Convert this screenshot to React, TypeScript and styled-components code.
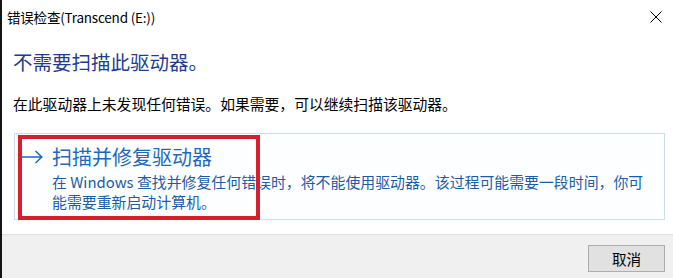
import styled, { createGlobalStyle } from "styled-components";

const GlobalStyle = createGlobalStyle`
  html, body {
    margin: 0;
    padding: 0;
    background: #ffffff;
  }
  body {
    font-family: "Noto Sans CJK SC", "Noto Sans", sans-serif;
  }
`;

const Window = styled.div`
  width: 673px;
  height: 278px;
  box-sizing: border-box;
  border-left: 2px solid #141414;
  background: #ffffff;
  display: flex;
  flex-direction: column;
`;

const TitleBar = styled.div`
  height: 33px;
  display: flex;
  align-items: center;
  justify-content: space-between;
  padding: 0 10px 0 5px;
`;

const Title = styled.span`
  font-size: 13.5px;
  color: #000000;
  letter-spacing: -0.2px;
`;

const CloseButton = styled.button`
  width: 14px;
  height: 14px;
  padding: 0;
  border: none;
  background: transparent;
  display: flex;
  align-items: center;
  justify-content: center;
`;

const Content = styled.div`
  flex: 1;
  padding: 17px 0 0 11px;
`;

const Heading = styled.h1`
  margin: 0;
  font-size: 19.5px;
  line-height: 24px;
  font-weight: 400;
  color: #1d3d8f;
`;

const Message = styled.p`
  margin: 20px 0 0;
  font-size: 14.8px;
  line-height: 20px;
  color: #000000;
`;

const OptionBox = styled.div`
  position: relative;
  margin: 19px 0 0 1px;
  width: 651px;
  height: 87px;
  box-sizing: border-box;
  border: 1px solid #ccdce8;
  background: #fdfeff;
  display: flex;
  align-items: flex-start;
  padding: 10px 8px 0 7px;
`;

const Arrow = styled.svg`
  flex: none;
  width: 21px;
  height: 14px;
  margin: 6px 9px 0 0;
`;

const OptionText = styled.div`
  display: flex;
  flex-direction: column;
`;

const OptionTitle = styled.div`
  font-size: 20px;
  line-height: 26px;
  color: #1f68c0;
`;

const OptionDesc = styled.div`
  margin-top: 2px;
  font-size: 14.9px;
  line-height: 20px;
  color: #1b5ca8;
  white-space: nowrap;
`;

const Highlight = styled.div`
  position: absolute;
  left: 3px;
  top: 1px;
  width: 242px;
  height: 85px;
  box-sizing: border-box;
  border: 4px solid #d4202c;
  pointer-events: none;
`;

const Footer = styled.div`
  height: 44px;
  box-sizing: border-box;
  border-top: 1px solid #dfdfdf;
  background: #f0f0f0;
  display: flex;
  justify-content: flex-end;
  padding: 10px 8px 0 0;
`;

const CancelButton = styled.button`
  width: 77px;
  height: 27px;
  box-sizing: border-box;
  border: 1px solid #adadad;
  background: #e1e1e1;
  font-family: "Noto Sans CJK SC", "Noto Sans", sans-serif;
  font-size: 14.6px;
  color: #000000;
  padding: 0;
`;

export default function App() {
  return (
    <>
      <GlobalStyle />
      <Window>
        <TitleBar>
          <Title>错误检查(Transcend (E:))</Title>
          <CloseButton aria-label="关闭">
            <svg width="12" height="12" viewBox="0 0 12 12">
              <path d="M0.5 0.5 L11.5 11.5 M11.5 0.5 L0.5 11.5" stroke="#000" strokeWidth="1" fill="none" />
            </svg>
          </CloseButton>
        </TitleBar>
        <Content>
          <Heading>不需要扫描此驱动器。</Heading>
          <Message>在此驱动器上未发现任何错误。如果需要，可以继续扫描该驱动器。</Message>
          <OptionBox>
            <Arrow viewBox="0 0 21 14">
              <path d="M0 7 H19.5 M13.5 1 L19.8 7 L13.5 13" stroke="#1f68c0" strokeWidth="1.5" fill="none" />
            </Arrow>
            <OptionText>
              <OptionTitle>扫描并修复驱动器</OptionTitle>
              <OptionDesc>
                在 Windows 查找并修复任何错误时，将不能使用驱动器。该过程可能需要一段时间，你可
                <br />
                能需要重新启动计算机。
              </OptionDesc>
            </OptionText>
            <Highlight />
          </OptionBox>
        </Content>
        <Footer>
          <CancelButton>取消</CancelButton>
        </Footer>
      </Window>
    </>
  );
}
